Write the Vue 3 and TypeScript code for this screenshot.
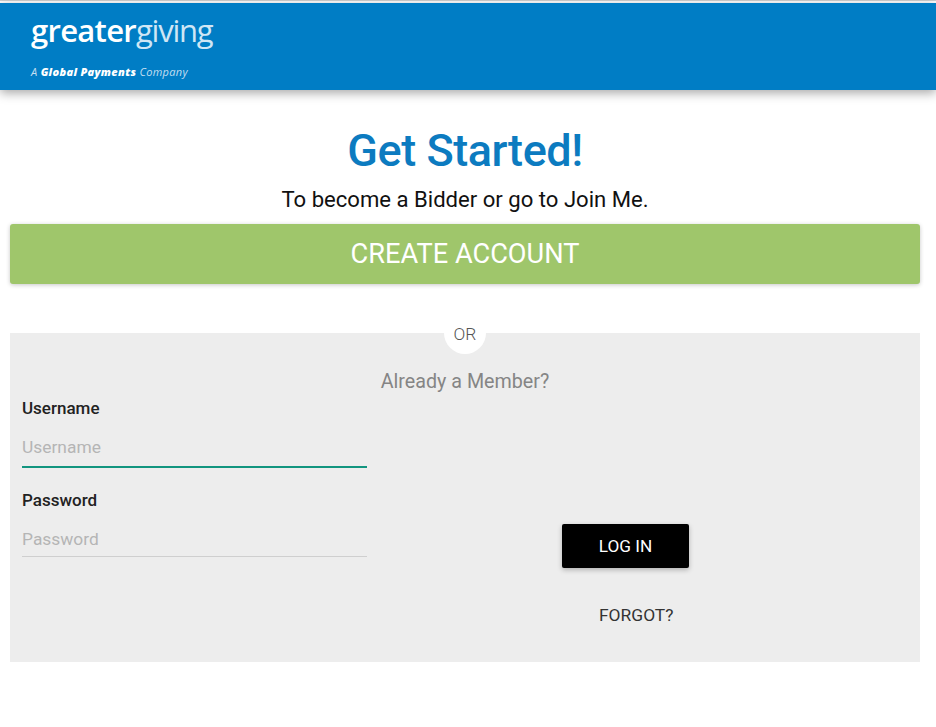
<script setup lang="ts">
const tagline = 'A'
</script>

<template>
  <div class="page">
    <header class="header">
      <div class="logo">
        <div class="wordmark"><span class="strong">greater</span><span class="thin">giving</span></div>
        <div class="tagline">{{ tagline }} <b>Global Payments</b> Company</div>
      </div>
    </header>
    <main class="main">
      <h1 class="title">Get Started!</h1>
      <p class="subtitle">To become a Bidder or go to Join Me.</p>
      <button class="create" type="button">CREATE ACCOUNT</button>
      <section class="panel">
        <span class="or">OR</span>
        <h2 class="member">Already a Member?</h2>
        <div class="columns">
          <form class="fields" @submit.prevent>
            <label class="label" for="u">Username</label>
            <input id="u" class="input active" placeholder="Username" />
            <label class="label second" for="p">Password</label>
            <input id="p" class="input" placeholder="Password" />
          </form>
          <div class="actions">
            <button class="login" type="button">LOG IN</button>
            <a class="forgot">FORGOT?</a>
          </div>
        </div>
      </section>
    </main>
  </div>
</template>

<style>
html, body { margin: 0; background: #fff; }
</style>

<style scoped>
.page { width: 936px; height: 727px; overflow: hidden; font-family: Roboto, "Liberation Sans", sans-serif; box-sizing: border-box; padding-top: 3px; background: linear-gradient(#cfcfcf 0 1px, #fff 1px); }
.header { height: 87px; background: #007dc5; box-shadow: 0 3px 10px rgba(0,0,0,.35); box-sizing: border-box; padding: 9px 0 0 31px; color: #fff; }
.wordmark { font-family: "Open Sans", sans-serif; font-size: 31px; line-height: 36px; letter-spacing: -.7px; }
.strong { font-weight: 600; }
.thin { font-weight: 400; color: #cfe6f5; letter-spacing: -1.25px; }
.tagline { margin-top: 18px; font-family: "Open Sans", sans-serif; font-size: 11px; line-height: 12px; font-style: italic; color: #c3dff1; letter-spacing: .3px; }
.tagline b { color: #fff; font-weight: 800; }
.main { padding: 0 16px 0 10px; text-align: center; }
.title { margin: 33px 0 0; color: #0c7bc0; font-size: 45px; line-height: 56px; font-weight: 500; letter-spacing: -.45px; }
.subtitle { margin: 6px 0 0; color: #111; font-size: 22.1px; line-height: 28px; }
.create { display: block; width: 100%; height: 60px; margin-top: 11px; border: 0; border-radius: 3px; background: #9fc66b; color: #fff; font: 400 27.2px Roboto, sans-serif; box-shadow: 0 1px 4px rgba(0,0,0,.22); }
.panel { position: relative; height: 329px; margin-top: 49px; background: #ededed; box-sizing: border-box; padding: 37px 12px 0; }
.or { position: absolute; left: 434px; top: -21px; width: 42px; height: 42px; border-radius: 50%; background: #fff; color: #555; font-size: 17.4px; font-weight: 300; line-height: 44px; }
.member { margin: 0; color: #858585; font-size: 19.7px; line-height: 24px; font-weight: 400; }
.columns { display: flex; text-align: left; }
.fields { width: 345px; display: flex; flex-direction: column; }
.label { color: #222; font-size: 17px; line-height: 19px; font-weight: 500; margin-top: 5px; }
.label.second { margin-top: 23px; }
.input { height: 34px; margin-top: 12px; padding: 0; background: transparent; border: 0; border-bottom: 1px solid #cfcfcf; outline: none; font: 400 17.4px Roboto, sans-serif; color: #222; }
.input.active { height: 38px; margin-top: 10px; border-bottom: 2px solid #12957f; }
.input::placeholder { color: #b5b5b5; opacity: 1; }
.actions { flex: 1; display: flex; flex-direction: column; align-items: flex-start; padding: 130px 0 0 195px; }
.login { width: 127px; height: 44px; border: 0; border-radius: 2px; background: #000; color: #fff; font: 400 17.2px Roboto, sans-serif; box-shadow: 0 2px 5px rgba(0,0,0,.25); }
.forgot { margin: 37px 0 0 37px; color: #333; font-size: 17.4px; line-height: 20px; }
</style>
